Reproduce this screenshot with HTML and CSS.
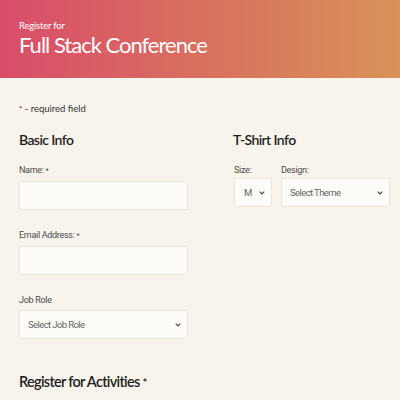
FILE: index.html
```html
<!DOCTYPE html>
<html>
<head>
<meta charset="utf-8">
<link rel="stylesheet" href="styles.css">
</head>
<body>
<header class="hero">
  <p class="hero-sub">Register for</p>
  <h1 class="hero-title">Full Stack Conference</h1>
</header>
<main class="form">
  <p class="note"><span class="ast">*</span> - required field</p>
  <div class="cols">
    <section class="col">
      <h2 class="sec-title">Basic Info</h2>
      <label class="lbl">Name: <span class="ast">*</span></label>
      <div class="input"></div>
      <label class="lbl">Email Address: <span class="ast">*</span></label>
      <div class="input"></div>
      <label class="lbl">Job Role</label>
      <div class="input select"><span>Select Job Role</span><svg class="chev" viewBox="0 0 6 4" width="6" height="4"><path d="M0.7 0.7l2.3 2.3 2.3-2.3" fill="none" stroke="#444" stroke-width="1.1"/></svg></div>
    </section>
    <section class="col">
      <h2 class="sec-title">T-Shirt Info</h2>
      <div class="shirt">
        <div class="field size">
          <label class="lbl">Size:</label>
          <div class="input select"><span>M</span><svg class="chev" viewBox="0 0 6 4" width="6" height="4"><path d="M0.7 0.7l2.3 2.3 2.3-2.3" fill="none" stroke="#444" stroke-width="1.1"/></svg></div>
        </div>
        <div class="field design">
          <label class="lbl">Design:</label>
          <div class="input select"><span>Select Theme</span><svg class="chev" viewBox="0 0 6 4" width="6" height="4"><path d="M0.7 0.7l2.3 2.3 2.3-2.3" fill="none" stroke="#444" stroke-width="1.1"/></svg></div>
        </div>
      </div>
    </section>
  </div>
  <h2 class="act-title">Register for Activities <span class="ast">*</span></h2>
</main>
</body>
</html>
```
FILE: styles.css
```css
html, body { margin: 0; padding: 0; }
body {
  background: #f8f4ec;
  font-family: Roboto, "Liberation Sans", sans-serif;
  color: #333;
  width: 400px;
  height: 400px;
  overflow: hidden;
}
.hero {
  height: 78px;
  box-sizing: border-box;
  padding: 20px 19px 0;
  background: linear-gradient(90deg, #d94c6a 0%, #d8705f 50%, #d99258 100%);
  color: #fff;
}
.hero-sub {
  margin: 0;
  font-family: Lato, sans-serif;
  font-size: 9.5px;
  line-height: 12px;
  letter-spacing: -0.2px;
}
.hero-title {
  margin: 0;
  font-family: Lato, sans-serif;
  font-weight: 400;
  font-size: 22px;
  line-height: 26px;
  letter-spacing: -1px;
}
.form { padding: 0 10px 0 19px; }
.note {
  margin: 0;
  padding-top: 24px;
  font-family: Lato, sans-serif;
  font-size: 9.5px;
  line-height: 14px;
  color: #333;
}
.ast { font-size: 0.8em; }
.cols {
  display: grid;
  grid-template-columns: 169px 1fr;
  column-gap: 45px;
  margin-top: 14px;
}
.col { display: flex; flex-direction: column; }
.sec-title {
  margin: 0 0 14px;
  font-family: Lato, sans-serif;
  font-weight: 600;
  font-size: 14px;
  line-height: 20px;
  letter-spacing: -0.6px;
  color: #1e1e1e;
}
.lbl {
  display: block;
  font-size: 9px;
  line-height: 12px;
  letter-spacing: -0.3px;
  color: #4a4a4a;
  margin-bottom: 4px;
}
.input {
  box-sizing: border-box;
  height: 29px;
  background: #fdfcf9;
  border: 1px solid #ebe6dc;
  border-radius: 2px;
  margin-bottom: 19px;
}
.select {
  display: flex;
  align-items: center;
  justify-content: space-between;
  padding: 0 6px 0 8px;
  font-size: 9.5px;
  letter-spacing: -0.6px;
  color: #666;
}
.chev { flex: none; }
.shirt { display: flex; gap: 9px; margin-left: 1px; }
.size { width: 38px; }
.design { flex: 1; }
.shirt .lbl { margin-bottom: 2px; }
.size .select { padding: 0 6px 0 9px; }
.act-title {
  margin: 14px 0 0;
  font-family: Lato, sans-serif;
  font-weight: 600;
  font-size: 14.5px;
  line-height: 20px;
  letter-spacing: -0.7px;
  color: #1e1e1e;
}
```
